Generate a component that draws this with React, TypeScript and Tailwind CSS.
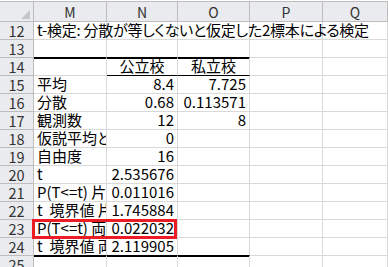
import React from "react";

const GL = "border-[#d9d9d9]";

type Cell = { t?: string; align?: "l" | "r" | "c"; cls?: string };

const rows: { n: number; cells: Cell[] }[] = [
  { n: 12, cells: [{ t: "t-検定: 分散が等しくないと仮定した2標本による検定", cls: "overflow-visible z-10 tracking-[-0.25px]" }, {}, {}, {}, {}] },
  { n: 13, cells: [{}, {}, {}, {}, {}] },
  { n: 14, cells: [{}, { t: "公立校", align: "c" }, { t: "私立校", align: "c" }, {}, {}] },
  { n: 15, cells: [{ t: "平均" }, { t: "8.4", align: "r" }, { t: "7.725", align: "r" }, {}, {}] },
  { n: 16, cells: [{ t: "分散" }, { t: "0.68", align: "r" }, { t: "0.113571", align: "r" }, {}, {}] },
  { n: 17, cells: [{ t: "観測数" }, { t: "12", align: "r" }, { t: "8", align: "r" }, {}, {}] },
  { n: 18, cells: [{ t: "仮説平均との差異" }, { t: "0", align: "r" }, {}, {}, {}] },
  { n: 19, cells: [{ t: "自由度" }, { t: "16", align: "r" }, {}, {}, {}] },
  { n: 20, cells: [{ t: "t" }, { t: "2.535676", align: "r" }, {}, {}, {}] },
  { n: 21, cells: [{ t: "P(T<=t) 片側" }, { t: "0.011016", align: "r" }, {}, {}, {}] },
  { n: 22, cells: [{ t: "t\u00a0 境界値 片側" }, { t: "1.745884", align: "r" }, {}, {}, {}] },
  { n: 23, cells: [{ t: "P(T<=t) 両側" }, { t: "0.022032", align: "r" }, {}, {}, {}] },
  { n: 24, cells: [{ t: "t\u00a0 境界値 両側" }, { t: "2.119905", align: "r" }, {}, {}, {}] },
  { n: 25, cells: [{}, {}, {}, {}, {}] },
];

export default function App() {
  return (
    <div
      className="relative w-[388px] h-[267px] overflow-hidden bg-white text-black [font-feature-settings:'palt']"
      style={{ fontFamily: '"Noto Sans CJK JP", "Noto Sans", sans-serif' }}
    >
      <div className="h-[1px] bg-white" />
      <div className="grid grid-cols-[34px_73px_71px_72px_73px_1fr] grid-rows-[21px_repeat(14,18px)]">
        <div className="relative border-t border-r border-b border-[#bdbdbd] bg-[#e9ebee]">
          <div className="absolute right-[3px] bottom-[2px] w-0 h-0 border-l-[9px] border-l-transparent border-b-[9px] border-b-[#c3c5c8]" />
        </div>
        {["M", "N", "O", "P", "Q"].map((c) => (
          <div
            key={c}
            className="border-t border-r border-b border-[#bdbdbd] bg-[#e9ebee] text-[14px] leading-[20px] text-center text-[#333]"
          >
            {c}
          </div>
        ))}
        {rows.map((r) => (
          <React.Fragment key={r.n}>
            <div className="border-r border-b border-[#bdbdbd] bg-[#e9ebee] text-[14.5px] leading-[18px] text-center text-[#333]">
              {r.n}
            </div>
            {r.cells.map((c, i) => {
              const inTable = i <= 2;
              let extra = "";
              if (r.n === 13 && inTable) extra += " !border-b-black";
              if (r.n === 14 && inTable) extra += " shadow-[inset_0_1px_0_#000]";
              if (r.n === 14 && (i === 1 || i === 2)) extra += " !border-b-black";
              if (r.n === 24 && inTable) extra += " !border-b-black";
              if (r.n === 25 && inTable) extra += " shadow-[inset_0_1px_0_#000]";
              const al =
                c.align === "r" ? "text-right pr-[3px]" : c.align === "c" ? "text-center" : "text-left pl-[3px]";
              return (
                <div
                  key={i}
                  className={`relative border-r border-b ${GL} text-[15px] leading-[18px] whitespace-nowrap ${
                    c.cls ?? "overflow-hidden"
                  } ${al}${extra}`}
                >
                  {c.t && <span className="block -mt-[1px]">{c.t}</span>}
                </div>
              );
            })}
          </React.Fragment>
        ))}
      </div>
      <div className="absolute left-[32px] top-[219px] w-[145px] h-[20px] border-[3px] border-[#ed1c24]" />
    </div>
  );
}
